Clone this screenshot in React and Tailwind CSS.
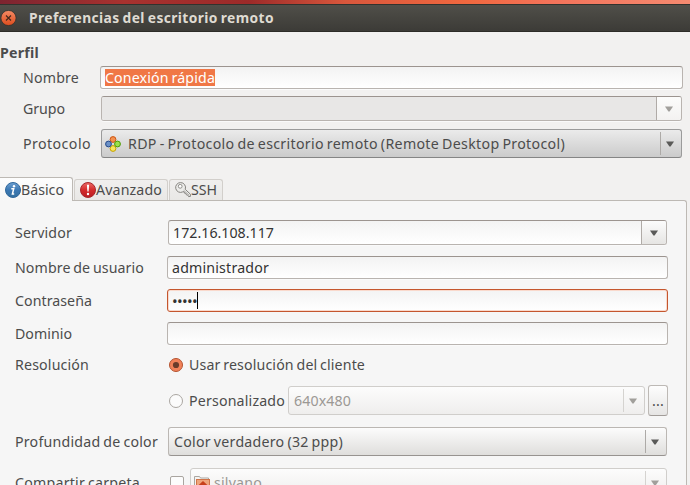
import { useLayoutEffect, useRef, useState } from "react";

// Text set to an exact width: the spare room is shared out between its letters.
function Txt({ w, className = "", children }) {
  const ref = useRef(null);
  const [spacing, setSpacing] = useState(0);
  useLayoutEffect(() => {
    const natural = ref.current.getBoundingClientRect().width;
    setSpacing((w - natural) / children.length);
  }, [w, children]);
  return (
    <span ref={ref} style={{ letterSpacing: spacing }} className={`inline-block shrink-0 whitespace-pre ${className}`}>
      {children}
    </span>
  );
}

function Arrow({ dim }) {
  return (
    <svg width="8" height="6" viewBox="0 0 8 6" className="shrink-0">
      <path d="M0 .5h8L4.6 5.500H3.400z" fill={dim ? "#a19f9b" : "#5a5a58"} />
    </svg>
  );
}

function Entry({ className = "", children }) {
  return (
    <div className={`flex shrink-0 items-center rounded-[3px] border border-[#b9b4b0] border-t-[#9c948f] bg-linear-to-b from-[#f3f3f3] to-white shadow-[0_1px_0_#fafafa] ${className}`}>
      {children}
    </div>
  );
}

function Combo({ className, dim, children }) {
  return (
    <div className={`flex h-[29px] shrink-0 items-center rounded-[3px] border bg-linear-to-b ${className}`}>
      {children}
      <div className={`ml-auto flex h-[23px] w-[21px] shrink-0 items-center border-l pt-px pl-[5px] ${dim ? "border-[#d5d3d0]" : "border-[#adaaa7]"}`}>
        <Arrow dim={dim} />
      </div>
    </div>
  );
}

function SplitEntry({ className, fieldClass, buttonClass, dim, children }) {
  return (
    <Entry className={`h-[25px] items-stretch! overflow-hidden ${className}`}>
      <div className={`flex flex-1 items-center ${fieldClass}`}>{children}</div>
      <div className={`flex w-[25px] items-center border-l border-[#b0aba7] bg-linear-to-b pt-px pl-[8px] ${buttonClass}`}>
        <Arrow dim={dim} />
      </div>
    </Entry>
  );
}

function CloseIcon() {
  return (
    <svg width="17" height="16" viewBox="0 0 17 16">
      <defs>
        <linearGradient id="close" x1="0" y1="0" x2="0" y2="1">
          <stop offset="0" stopColor="#f58b65" />
          <stop offset="1" stopColor="#dd4c1d" />
        </linearGradient>
      </defs>
      <circle cx="8.500" cy="8" r="7.600" fill="url(#close)" stroke="#34312c" strokeWidth=".8" />
      <path d="M6 5.500l5 5M11 5.500l-5 5" stroke="#46291c" strokeWidth="1.200" />
    </svg>
  );
}

function ProtocolIcon() {
  return (
    <svg width="16" height="16" viewBox="0 0 16 16" className="shrink-0">
      <circle cx="8" cy="3.500" r="2.900" fill="#f39150" stroke="#cc5512" />
      <circle cx="8" cy="12.500" r="2.900" fill="#f7e65c" stroke="#c4a000" />
      <circle cx="3.500" cy="8" r="2.900" fill="#6b91c7" stroke="#24498a" />
      <circle cx="12.500" cy="8" r="2.900" fill="#9be04b" stroke="#4e9a06" />
    </svg>
  );
}

function InfoIcon() {
  return (
    <svg width="16" height="16" viewBox="0 0 16 16" className="shrink-0">
      <defs>
        <linearGradient id="info" x1="0" y1="0" x2="0" y2="1">
          <stop offset="0" stopColor="#6fa0d0" />
          <stop offset=".5" stopColor="#3b78b4" />
          <stop offset="1" stopColor="#34709f" />
        </linearGradient>
      </defs>
      <circle cx="8" cy="8" r="7.500" fill="url(#info)" stroke="#2f679c" />
      <circle cx="9" cy="4.200" r="1.200" fill="#fff" />
      <path d="M6.300 6.800h2.400L7.400 12h1.800" fill="none" stroke="#fff" strokeWidth="1.500" />
    </svg>
  );
}

function AlertIcon() {
  return (
    <svg width="16" height="16" viewBox="0 0 16 16" className="shrink-0">
      <defs>
        <linearGradient id="alert" x1="0" y1="0" x2="0" y2="1">
          <stop offset="0" stopColor="#ec6a66" />
          <stop offset=".5" stopColor="#d52b2b" />
          <stop offset="1" stopColor="#b81c22" />
        </linearGradient>
      </defs>
      <circle cx="8" cy="8" r="7.500" fill="url(#alert)" stroke="#a8282c" />
      <path d="M6.900 2.800h2.200L8.600 9.400H7.400z" fill="#fff" />
      <circle cx="8" cy="12" r="1.200" fill="#fff" />
    </svg>
  );
}

function KeyIcon() {
  return (
    <svg width="16" height="16" viewBox="0 0 16 16" className="shrink-0">
      <path
        d="M5.500.600a4.900 4.900 0 1 0 2.200 9.300l1.400-.3.300 1.500 1.600.2.300 1.500 1.500.3.800 1.500 1.800-.2v-2.200L10.200 7.300A4.900 4.900 0 0 0 5.500.600z"
        fill="#ececea"
        stroke="#85837f"
        strokeLinejoin="round"
      />
      <circle cx="5.200" cy="4.300" r="1.900" fill="#fff" stroke="#85837f" strokeWidth=".9" />
      <path d="M8.600 8.200l5.600 5" stroke="#a5a39f" strokeWidth=".8" />
    </svg>
  );
}

function FolderHomeIcon() {
  return (
    <svg width="16" height="16" viewBox="0 0 16 16" className="shrink-0">
      <path d="M.5 14.500V1.500h5l1 1.500h8v4" fill="#f4f3f1" stroke="#aaa7a2" />
      <rect x="2.500" y="4.500" width="13" height="11" fill="#efa57c" stroke="#d17448" />
      <path d="M9 6l4.500 4.200H12V13.500H10V11H8v2.500H6V10.200H4.500z" fill="#c8401b" />
    </svg>
  );
}

function Radio({ on }) {
  return (
    <svg width="16" height="16" viewBox="0 0 16 16" className="shrink-0">
      <circle cx="8" cy="8" r="6.500" fill={on ? "#f28259" : "#fbfbfb"} stroke={on ? "#b35330" : "#aaa6a1"} />
      {on && <circle cx="8" cy="8" r="3.100" fill="#6b3c2a" />}
    </svg>
  );
}

function Label({ w, children }) {
  return (
    <div className="flex w-[152px] shrink-0">
      <Txt w={w}>{children}</Txt>
    </div>
  );
}

export default function App() {
  return (
    <div className="flex h-[485px] w-[690px] flex-col overflow-hidden bg-[#f2f1f0] font-['Noto_Sans',sans-serif] text-[14.2px] leading-[20px] text-[#4c4c4c] [word-spacing:-1px]">
      <div className="h-[4px] shrink-0 bg-[linear-gradient(90deg,#7d2430_0%,#a8322f_18%,#9c2a29_36%,#d9573c_50%,#f1683f_68%,#f4735a_80%,#f58a70_100%)]" />
      <div className="flex h-[28px] shrink-0 items-center border-y border-t-[#33322e] border-b-[#2d2c28] bg-linear-to-b from-[#504f49] to-[#3c3b37] text-[#dfdbd2]">
        <CloseIcon />
        <Txt w={245} className="ml-[12px] text-[13.8px] font-bold">Preferencias del escritorio remoto</Txt>
      </div>

      <div className="mt-[11px] flex h-[20px] shrink-0">
        <Txt w={39} className="font-bold">Perfil</Txt>
      </div>

      <div className="mt-[3px] flex h-[23px] shrink-0 items-center pl-[23px]">
        <div className="w-[77px] shrink-0"><Txt w={56}>Nombre</Txt></div>
        <Entry className="h-[23px] w-[583px] pl-[4px]">
          <Txt w={110} className="h-[17px] bg-[#f07746] leading-[18px] text-white">Conexión rápida</Txt>
        </Entry>
      </div>
      <div className="mt-[7px] flex h-[25px] shrink-0 items-center pl-[23px]">
        <div className="w-[78px] shrink-0"><Txt w={42}>Grupo</Txt></div>
        <SplitEntry dim className="w-[581px]" fieldClass="bg-[#e8e7e6]" buttonClass="from-[#fcfcfb] to-[#f3f2f1]" />
      </div>
      <div className="mt-[8px] flex h-[29px] shrink-0 items-center pl-[23px]">
        <div className="w-[78px] shrink-0"><Txt w={68}>Protocolo</Txt></div>
        <Combo className="w-[581px] border-[#9b9b9b] border-b-[#858585] from-[#ebebeb] to-[#cbcbcb] pl-[3px]">
          <ProtocolIcon />
          <Txt w={437} className="ml-[7px]">RDP - Protocolo de escritorio remoto (Remote Desktop Protocol)</Txt>
        </Combo>
      </div>

      <div className="mt-[19px] flex h-[23px] shrink-0 items-end">
        <div className="z-10 -mb-px flex h-[24px] w-[73px] items-center rounded-tr-[3px] border-t border-r border-[#bdb9b4] bg-linear-to-b from-[#fdfdfd] to-[#f6f6f6] pl-[5px]">
          <InfoIcon />
          <Txt w={43}>Básico</Txt>
        </div>
        <div className="ml-px flex h-[21px] w-[94px] items-center rounded-t-[3px] border border-b-0 border-[#d2cfcb] bg-linear-to-b from-[#f0efee] to-[#e9e8e6] pl-[5px]">
          <AlertIcon />
          <Txt w={66}>Avanzado</Txt>
        </div>
        <div className="ml-px flex h-[21px] w-[54px] items-center rounded-t-[3px] border border-b-0 border-[#d2cfcb] bg-linear-to-b from-[#f0efee] to-[#e9e8e6] pl-[5px]">
          <KeyIcon />
          <Txt w={26}>SSH</Txt>
        </div>
      </div>

      <div className="flex h-[285px] w-[687px] shrink-0 flex-col overflow-hidden rounded-tr-[3px] border-t border-r border-[#bdb9b4] bg-[#f6f6f6] pt-[19px] pl-[15px]">
        <div className="flex h-[25px] shrink-0 items-center">
          <Label w={57}>Servidor</Label>
          <SplitEntry className="ml-px w-[499px]" fieldClass="pl-[4px]" buttonClass="from-[#fcfcfc] to-[#e6e5e3]">
            <Txt w={101} className="text-[#333]">172.16.108.117</Txt>
          </SplitEntry>
        </div>
        <div className="mt-[11px] flex h-[23px] shrink-0 items-center">
          <Label w={129}>Nombre de usuario</Label>
          <Entry className="h-[23px] w-[501px] pl-[4px]">
            <Txt w={97} className="text-[#333]">administrador</Txt>
          </Entry>
        </div>
        <div className="mt-[10px] flex h-[23px] shrink-0 items-center">
          <Label w={77}>Contraseña</Label>
          <Entry className="h-[23px] w-[501px] border-[#c4562e]! pl-[4px] shadow-[inset_0_0_0_1px_#f9d9cc]!">
            <Txt w={25} className="text-[15px] text-[#333]">•••••</Txt>
            <span className="h-[17px] w-px bg-black" />
          </Entry>
        </div>
        <div className="mt-[10px] flex h-[23px] shrink-0 items-center">
          <Label w={57}>Dominio</Label>
          <Entry className="h-[23px] w-[501px]" />
        </div>
        <div className="mt-[10px] flex h-[20px] shrink-0 items-center">
          <Label w={74}>Resolución</Label>
          <div className="flex items-center gap-[5px] pl-px">
            <Radio on />
            <Txt w={176}>Usar resolución del cliente</Txt>
          </div>
        </div>
        <div className="mt-[10px] flex h-[31px] shrink-0 items-center pl-[153px]">
          <Radio />
          <Txt w={96} className="ml-[5px]">Personalizado</Txt>
          <Combo dim className="ml-[3px] w-[357px] border-[#d0cecb] from-[#fcfcfc] to-[#efeeed] pl-[5px] text-[#9b9894]">
            <Txt w={57}>640x480</Txt>
          </Combo>
          <div className="ml-[3px] flex h-[31px] w-[20px] items-center justify-center rounded-[3px] border border-[#bdb9b5] border-b-[#a19c98] bg-linear-to-b from-[#fdfdfd] to-[#e6e5e4]">
            <Txt w={12}>...</Txt>
          </div>
        </div>
        <div className="mt-[11px] flex h-[29px] shrink-0 items-center">
          <Label w={143}>Profundidad de color</Label>
          <Combo className="ml-px w-[499px] border-[#bbb7b3] border-b-[#979390] from-[#fcfcfc] to-[#dfdedc] pl-[5px]">
            <Txt w={169}>Color verdadero (32 ppp)</Txt>
          </Combo>
        </div>
        <div className="mt-[12px] flex h-[29px] shrink-0 items-center">
          <Label w={125}>Compartir carpeta</Label>
          <div className="ml-[3px] h-[14px] w-[14px] shrink-0 rounded-[2px] border border-[#aaa5a0] bg-[#fcfcfc]" />
          <Combo dim className="ml-[6px] w-[477px] border-[#d0cecb] from-[#fcfcfc] to-[#efeeed] pl-[3px] text-[#9b9894]">
            <FolderHomeIcon />
            <Txt w={48} className="ml-[4px]">silvano</Txt>
          </Combo>
        </div>
      </div>
    </div>
  );
}
